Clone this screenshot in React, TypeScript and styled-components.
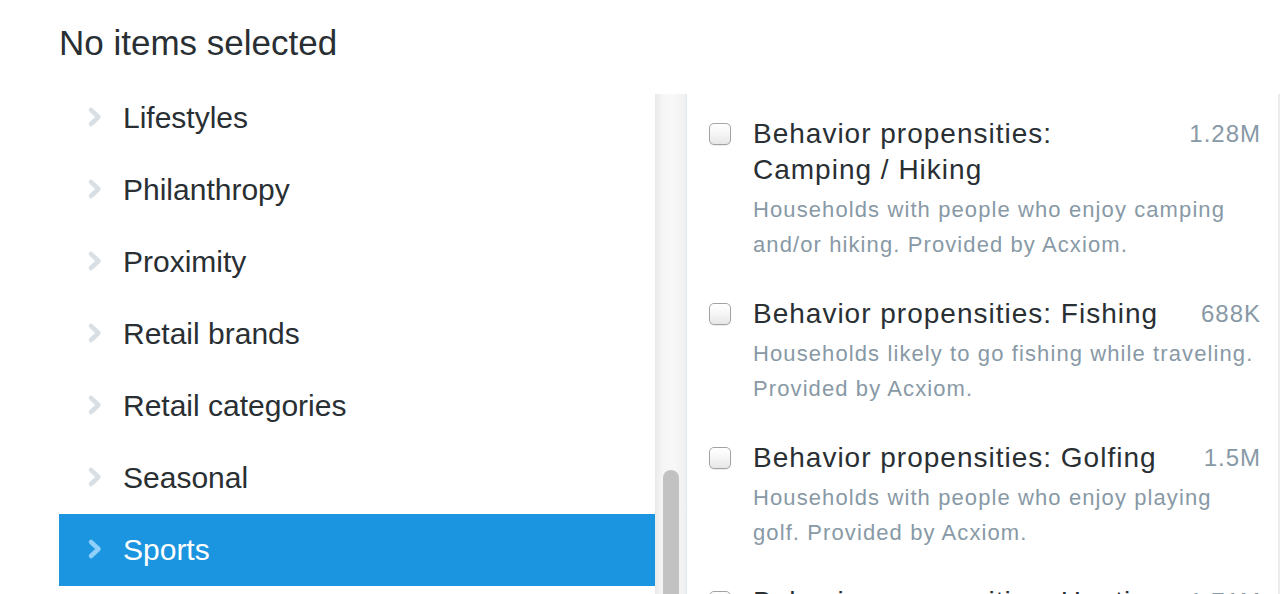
import React from "react";
import styled, { createGlobalStyle } from "styled-components";

const GlobalStyle = createGlobalStyle`
  html, body {
    margin: 0;
    padding: 0;
    background: #ffffff;
    overflow: hidden;
  }
  body {
    font-family: "Liberation Sans", Arial, Helvetica, sans-serif;
    color: #292f33;
  }
`;

const categories = [
  "Lifestyles",
  "Philanthropy",
  "Proximity",
  "Retail brands",
  "Retail categories",
  "Seasonal",
  "Sports",
];

const behaviors = [
  {
    title: "Behavior propensities: Camping / Hiking",
    count: "1.28M",
    text: "Households with people who enjoy camping and/or hiking. Provided by Acxiom.",
  },
  {
    title: "Behavior propensities: Fishing",
    count: "688K",
    text: "Households likely to go fishing while traveling. Provided by Acxiom.",
  },
  {
    title: "Behavior propensities: Golfing",
    count: "1.5M",
    text: "Households with people who enjoy playing golf. Provided by Acxiom.",
  },
  {
    title: "Behavior propensities: Hunting",
    count: "1.71M",
    text: "Households with people who enjoy hunting. Provided by Acxiom.",
  },
];

const Chevron = ({ active }: { active?: boolean }) => (
  <ChevronIcon viewBox="0 0 16 22" active={active}>
    <path d="M4 4 L11.5 11 L4 18" />
  </ChevronIcon>
);

const App = () => {
  return (
    <Page>
      <GlobalStyle />
      <Header>No items selected</Header>
      <Columns>
        <CategoryPane>
          <CategoryList>
            {categories.map((name) => (
              <CategoryRow key={name} active={name === "Sports"}>
                <Chevron active={name === "Sports"} />
                <CategoryName>{name}</CategoryName>
              </CategoryRow>
            ))}
          </CategoryList>
        </CategoryPane>
        <ScrollTrack>
          <ScrollThumb />
        </ScrollTrack>
        <DetailPane>
          {behaviors.map((b) => (
            <Behavior key={b.title}>
              <Check type="checkbox" />
              <BehaviorBody>
                <BehaviorHead>
                  <BehaviorTitle>{b.title}</BehaviorTitle>
                  <BehaviorCount>{b.count}</BehaviorCount>
                </BehaviorHead>
                <BehaviorText>{b.text}</BehaviorText>
              </BehaviorBody>
            </Behavior>
          ))}
        </DetailPane>
      </Columns>
    </Page>
  );
};

export default App;

const Page = styled.div`
  height: 100vh;
  display: flex;
  flex-direction: column;
  padding-left: 59px;
  box-sizing: border-box;
`;

const Header = styled.h1`
  margin: 0;
  height: 94px;
  box-sizing: border-box;
  padding-top: 23px;
  font-size: 35px;
  line-height: 40px;
  font-weight: 400;
  color: #292f33;
  white-space: nowrap;
`;

const Columns = styled.div`
  flex: 1;
  display: flex;
  min-height: 0;
`;

const CategoryPane = styled.div`
  width: 596px;
  flex: none;
  overflow: hidden;
`;

const CategoryList = styled.ul`
  list-style: none;
  margin: -12px 0 0;
  padding: 0;
`;

const CategoryRow = styled.li<{ active?: boolean }>`
  height: 72px;
  display: flex;
  align-items: center;
  gap: 20px;
  padding-left: 28px;
  background: ${(p) => (p.active ? "#1b95e0" : "transparent")};
  color: ${(p) => (p.active ? "#ffffff" : "#292f33")};
`;

const ChevronIcon = styled.svg<{ active?: boolean }>`
  width: 16px;
  height: 22px;
  flex: none;
  margin-top: -3px;

  path {
    fill: none;
    stroke: ${(p) => (p.active ? "#8fd0fb" : "#d8e0e6")};
    stroke-width: 4.5;
    stroke-linecap: round;
    stroke-linejoin: round;
  }
`;

const CategoryName = styled.span`
  font-size: 30px;
  line-height: 72px;
  white-space: nowrap;
`;

const ScrollTrack = styled.div`
  width: 31px;
  flex: none;
  position: relative;
  background: linear-gradient(90deg, #e9e9e9 0%, #f6f6f6 25%, #f8f8f8 60%, #f0f0f0 100%);
  border-right: 1px solid #e1e8ed;
`;

const ScrollThumb = styled.div`
  position: absolute;
  left: 8px;
  top: 376px;
  width: 16px;
  height: 200px;
  border-radius: 8px;
  background: #c2c2c2;
`;

const DetailPane = styled.div`
  width: 593px;
  flex: none;
  box-sizing: border-box;
  padding: 22px 17px 0 22px;
  border-right: 2px solid #ececec;
  overflow: hidden;
`;

const Behavior = styled.div`
  display: flex;
  gap: 22px;
  padding-bottom: 34px;
`;

const Check = styled.input`
  appearance: none;
  -webkit-appearance: none;
  margin: 7px 0 0;
  width: 22px;
  height: 22px;
  flex: none;
  box-sizing: border-box;
  border: 1px solid #a3a3a3;
  border-radius: 5px;
  background: linear-gradient(180deg, #ffffff 0%, #f7f7f7 45%, #e6e6e6 100%);
  box-shadow: 0 1px 1px rgba(0, 0, 0, 0.08);
`;

const BehaviorBody = styled.div`
  flex: 1;
  min-width: 0;
`;

const BehaviorHead = styled.div`
  display: flex;
  align-items: flex-start;
  gap: 20px;
`;

const BehaviorTitle = styled.div`
  flex: 1;
  font-size: 28px;
  line-height: 36px;
  letter-spacing: 1px;
  color: #292f33;
`;

const BehaviorCount = styled.div`
  flex: none;
  font-size: 24px;
  line-height: 36px;
  letter-spacing: 1px;
  color: #8899a6;
`;

const BehaviorText = styled.p`
  margin: 4px 0 0;
  font-size: 22px;
  line-height: 35px;
  letter-spacing: 1.1px;
  color: #8899a6;
`;
